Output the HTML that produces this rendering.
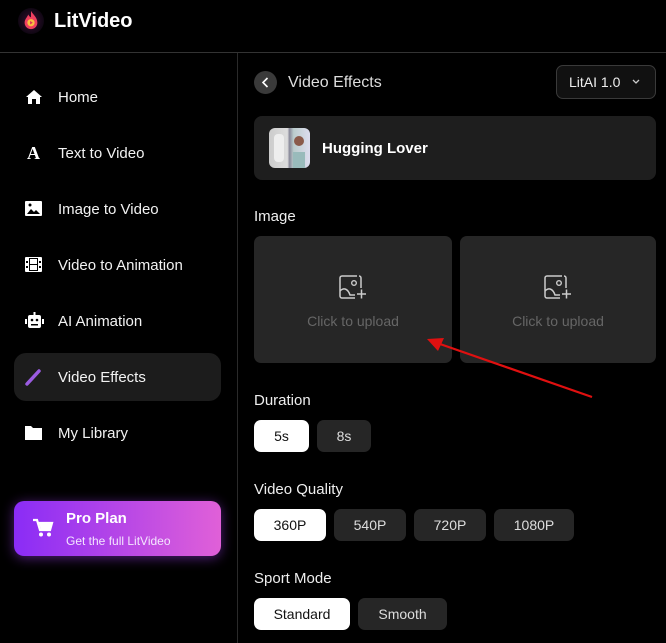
<!DOCTYPE html>
<html><head><meta charset="utf-8"><style>
*{margin:0;padding:0;box-sizing:border-box}
body{width:666px;height:643px;background:#000;color:#fff;font-family:"Liberation Sans",sans-serif;position:relative;overflow:hidden}
.a{position:absolute}
.nav{position:absolute;left:58px;font-size:15px;color:#f2f2f2}
.ic{position:absolute;left:25px}
.lbl{position:absolute;left:254px;font-size:15px;color:#eee}
.btn{position:absolute;height:32px;border-radius:7px;background:#262626;color:#ddd;font-size:14px;display:flex;align-items:center;justify-content:center}
.btn.on{background:#fff;color:#111}
.up{position:absolute;top:236px;height:127px;background:#262626;border-radius:7px}
.up span{position:absolute;top:77px;left:0;right:0;text-align:center;color:#666;font-size:14px}
.up svg{position:absolute;top:39px;left:50%;margin-left:-14px}
</style></head><body>
<div class="a" style="left:0;top:52px;width:666px;height:1px;background:#333"></div>
<div class="a" style="left:237px;top:53px;width:1px;height:590px;background:#2a2a2a"></div>
<div class="a" style="left:18px;top:8px;width:26px;height:26px;border-radius:50%;background:radial-gradient(circle,#3a1030 0,#150818 60%,#000 100%)"></div>
<svg class="a" style="left:21px;top:9px" width="20" height="22" viewBox="0 0 22 24"><path d="M11 2C13 6 18 9 18 15a7 7 0 0 1-14 0c0-4 3-6 4-9 1 2 2 3 3 3 0-3 0-5 0-7z" fill="#f04060"/><circle cx="11" cy="15" r="4" fill="#f8c040"/><path d="M10 13l3 2-3 2z" fill="#e0305a"/></svg>
<div class="a" style="left:54px;top:10px;font-size:20px;font-weight:bold">LitVideo</div>

<svg class="ic" style="top:89px" width="18" height="16" viewBox="0 0 18 16"><path d="M9 1L1 8h2v7h4v-5h4v5h4V8h2z" fill="#fff"/></svg>
<div class="nav" style="top:89px">Home</div>
<div class="ic" style="top:143px;font-family:'Liberation Serif',serif;font-size:18px;font-weight:bold;left:27px">A</div>
<div class="nav" style="top:145px">Text to Video</div>
<svg class="ic" style="top:201px" width="17" height="15" viewBox="0 0 17 15"><rect width="17" height="15" rx="1" fill="#fff"/><path d="M2 13l4-5 3 3 2-2 4 4z" fill="#000"/><circle cx="5" cy="4" r="1.5" fill="#000"/></svg>
<div class="nav" style="top:201px">Image to Video</div>
<svg class="ic" style="top:257px" width="17" height="15" viewBox="0 0 17 15"><rect width="17" height="15" rx="1" fill="#fff"/><rect x="4" y="1" width="9" height="13" fill="#000"/><rect x="5" y="2" width="7" height="5" fill="#fff"/><rect x="5" y="8" width="7" height="5" fill="#fff"/><rect x="1" y="4" width="2" height="2" fill="#000"/><rect x="1" y="9" width="2" height="2" fill="#000"/><rect x="14" y="4" width="2" height="2" fill="#000"/><rect x="14" y="9" width="2" height="2" fill="#000"/></svg>
<div class="nav" style="top:257px">Video to Animation</div>
<svg class="ic" style="top:312px" width="19" height="17" viewBox="0 0 19 17"><rect x="3" y="3" width="13" height="13" rx="2" fill="#fff"/><rect x="0" y="7" width="2" height="5" fill="#fff"/><rect x="17" y="7" width="2" height="5" fill="#fff"/><rect x="8.5" y="0" width="2" height="3" fill="#fff"/><circle cx="7" cy="8" r="1.3" fill="#000"/><circle cx="12" cy="8" r="1.3" fill="#000"/><rect x="6" y="12" width="7" height="1.5" fill="#000"/></svg>
<div class="nav" style="top:313px">AI Animation</div>
<div class="a" style="left:14px;top:353px;width:207px;height:48px;background:#1c1c1c;border-radius:12px"></div>
<svg class="ic" style="top:368px" width="18" height="18" viewBox="0 0 18 18"><path d="M2 16L14 3" stroke="#9a5be0" stroke-width="3.5" stroke-linecap="round"/></svg>
<div class="nav" style="top:369px">Video Effects</div>
<svg class="ic" style="top:425px" width="17" height="15" viewBox="0 0 17 15"><path d="M0 1h6l2 2h9v12H0z" fill="#fff"/></svg>
<div class="nav" style="top:425px">My Library</div>

<div class="a" style="left:14px;top:501px;width:207px;height:55px;border-radius:10px;background:linear-gradient(90deg,#8a2cf6,#e060d8);box-shadow:0 2px 12px rgba(160,60,240,.5)"></div>
<svg class="a" style="left:32px;top:518px" width="22" height="20" viewBox="0 0 22 20"><path d="M1 2h4l3 10h10l2-7H6" stroke="#fff" stroke-width="2.2" fill="none"/><path d="M7 5h13l-2 7H9z" fill="#fff"/><circle cx="9" cy="16.5" r="2" fill="#fff"/><circle cx="17" cy="16.5" r="2" fill="#fff"/></svg>
<div class="a" style="left:66px;top:510px;font-size:15px;font-weight:bold">Pro Plan</div>
<div class="a" style="left:66px;top:534px;font-size:12px;color:#f4e6ff">Get the full LitVideo</div>

<div class="a" style="left:254px;top:71px;width:23px;height:23px;border-radius:50%;background:#3a3a3a"></div>
<svg class="a" style="left:254px;top:71px" width="23" height="23"><path d="M13.5 7l-4.5 4.5 4.5 4.5" stroke="#fff" stroke-width="1.6" fill="none"/></svg>
<div class="a" style="left:288px;top:74px;font-size:16px;color:#ddd">Video Effects</div>
<div class="a" style="left:556px;top:65px;width:100px;height:34px;border:1px solid #3a3a3a;border-radius:7px;background:#111"></div>
<div class="a" style="left:569px;top:74px;font-size:14px;color:#eee">LitAI 1.0</div>
<svg class="a" style="left:632px;top:79px" width="8" height="6"><path d="M1 1l3 3 3-3" stroke="#ccc" stroke-width="1.3" fill="none"/></svg>

<div class="a" style="left:254px;top:116px;width:402px;height:64px;background:#1e1e1e;border-radius:8px"></div>
<div class="a" style="left:269px;top:128px;width:41px;height:40px;border-radius:6px;overflow:hidden;background:linear-gradient(90deg,#ccc 0,#ddd 45%,#889 50%,#bcc 60%,#dde 100%)">
<div class="a" style="left:5px;top:6px;width:10px;height:28px;background:#eee;border-radius:4px"></div>
<div class="a" style="left:25px;top:8px;width:10px;height:10px;background:#8a5a4a;border-radius:50%"></div>
<div class="a" style="left:24px;top:24px;width:12px;height:16px;background:#9bb"></div></div>
<div class="a" style="left:322px;top:140px;font-size:15px;font-weight:bold">Hugging Lover</div>

<div class="lbl" style="top:208px">Image</div>
<div class="up" style="left:254px;width:198px"><svg width="28" height="26" viewBox="0 0 28 26"><path d="M18 1H3a2 2 0 0 0-2 2v18a2 2 0 0 0 2 2h13M20 1a2 2 0 0 1 2 2v10" stroke="#ccc" stroke-width="1.5" fill="none"/><circle cx="15" cy="8" r="2.3" stroke="#ccc" stroke-width="1.4" fill="none"/><path d="M1 16c4-4 8-2 10 4h5M18 19h9M22.5 14.5v9" stroke="#ccc" stroke-width="1.5" fill="none"/></svg><span>Click to upload</span></div>
<div class="up" style="left:460px;width:196px"><svg width="28" height="26" viewBox="0 0 28 26"><path d="M18 1H3a2 2 0 0 0-2 2v18a2 2 0 0 0 2 2h13M20 1a2 2 0 0 1 2 2v10" stroke="#ccc" stroke-width="1.5" fill="none"/><circle cx="15" cy="8" r="2.3" stroke="#ccc" stroke-width="1.4" fill="none"/><path d="M1 16c4-4 8-2 10 4h5M18 19h9M22.5 14.5v9" stroke="#ccc" stroke-width="1.5" fill="none"/></svg><span>Click to upload</span></div>

<svg class="a" style="left:0;top:0" width="666" height="643"><line x1="592" y1="397" x2="440" y2="344" stroke="#e01010" stroke-width="2.2"/><path d="M427 339l17-1-6 13z" fill="#e01010"/></svg>

<div class="lbl" style="top:392px">Duration</div>
<div class="btn on" style="left:254px;top:420px;width:55px">5s</div>
<div class="btn" style="left:317px;top:420px;width:54px">8s</div>
<div class="lbl" style="top:481px">Video Quality</div>
<div class="btn on" style="left:254px;top:509px;width:72px">360P</div>
<div class="btn" style="left:334px;top:509px;width:72px">540P</div>
<div class="btn" style="left:414px;top:509px;width:72px">720P</div>
<div class="btn" style="left:494px;top:509px;width:80px">1080P</div>
<div class="lbl" style="top:570px">Sport Mode</div>
<div class="btn on" style="left:254px;top:598px;width:96px">Standard</div>
<div class="btn" style="left:358px;top:598px;width:89px">Smooth</div>
</body></html>
